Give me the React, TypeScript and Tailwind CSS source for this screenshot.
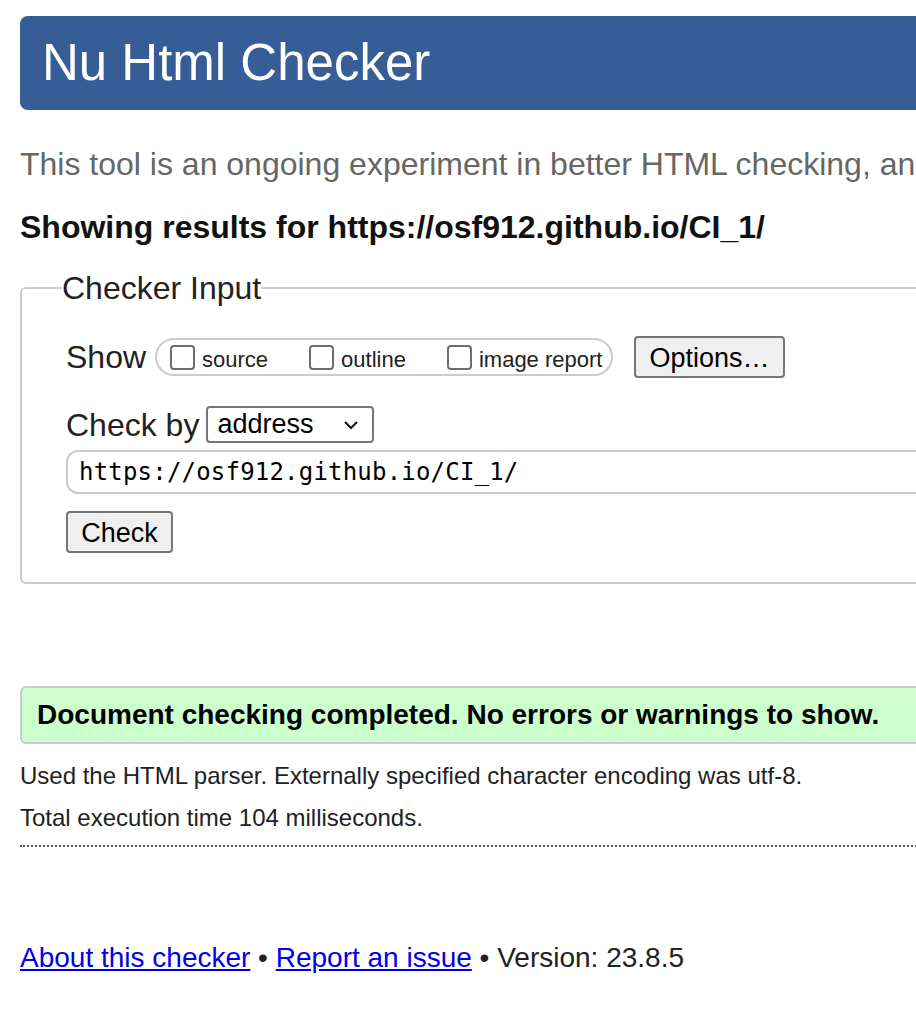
import React from 'react';

const Box: React.FC<{ label: string; className?: string }> = ({ label, className }) => (
  <label className={`flex items-center ${className ?? ''}`}>
    <span className="block w-[25px] h-[25px] rounded-[4px] border-2 border-[#6d6d6d] bg-white" />
    <span className="ml-[7px] mt-[5px] text-[22px] text-[#222]">{label}</span>
  </label>
);

export default function App() {
  return (
    <div className="w-[916px] h-[1011px] overflow-hidden bg-white font-['Liberation_Sans',Arial,sans-serif] text-[#222]">
      <div className="pl-[20px] pt-[16px] w-[1200px]">
        {/* Header */}
        <header className="h-[94px] bg-[#365d95] rounded-[8px] flex items-center pl-[22px]">
          <h1 className="text-[51px] text-white leading-none mt-[-2px]">Nu Html Checker</h1>
        </header>

        <p className="mt-[36px] text-[32px] leading-[37px] text-[#666] whitespace-nowrap">
          This tool is an ongoing experiment in better HTML checking, and its behavior remains subject to change
        </p>

        <h2 className="mt-[26px] text-[32px] leading-[36px] font-bold text-[#111] whitespace-nowrap">
          Showing results for https://osf912.github.io/CI_1/
        </h2>

        {/* Checker Input */}
        <fieldset className="mt-[27px] border-2 border-[#cccccc] rounded-[6px] px-[44px] pb-[29px] pt-0 min-w-0">
          <legend className="-ml-[4px] px-0 text-[32px] leading-[32px] text-[#222]">Checker Input</legend>

          <div className="flex items-center mt-[32px] h-[42px]">
            <span className="text-[32px] leading-none mr-[9px]">Show</span>
            <div className="flex items-center h-[38px] w-[458px] border-2 border-[#cccccc] rounded-full pl-[13px]">
              <Box label="source" />
              <Box label="outline" className="ml-[41px]" />
              <Box label="image report" className="ml-[41px]" />
            </div>
            <button className="ml-[21px] h-[42px] w-[151px] bg-[#efefef] border-2 border-[#767676] rounded-[4px] text-[27px] text-black">
              Options…
            </button>
          </div>

          <div className="flex items-center mt-[28px] h-[37px]">
            <span className="text-[32px] leading-none mr-[7px]">Check by</span>
            <div className="flex items-center justify-between h-[37px] w-[168px] border-2 border-[#767676] rounded-[4px] pl-[9px] pr-[12px]">
              <span className="text-[27px] text-black leading-none">address</span>
              <svg width="18" height="12" viewBox="0 0 18 12" fill="none" stroke="#111" strokeWidth="2">
                <path d="M3 3l6 6 6-6" />
              </svg>
            </div>
          </div>

          <div className="mt-[7px] h-[44px] border-2 border-[#cccccc] rounded-[12px] flex items-center pl-[11px]">
            <span className="font-['DejaVu_Sans_Mono',Consolas,monospace] text-[24px] text-black tracking-[0.2px]">
              https://osf912.github.io/CI_1/
            </span>
          </div>

          <button className="mt-[17px] h-[42px] w-[107px] bg-[#efefef] border-2 border-[#767676] rounded-[4px] text-[27px] text-black">
            Check
          </button>
        </fieldset>

        {/* Success message */}
        <div className="mt-[102px] h-[58px] bg-[#ccffcc] border-2 border-[#cccccc] rounded-[6px] flex items-center pl-[15px]">
          <p className="text-[28px] font-bold text-black whitespace-nowrap">Document checking completed. No errors or warnings to show.</p>
        </div>

        <p className="mt-[18px] text-[24px] leading-[28px]">Used the HTML parser. Externally specified character encoding was utf-8.</p>
        <p className="mt-[14px] text-[24px] leading-[28px]">Total execution time 104 milliseconds.</p>

        <hr className="mt-[13px] border-0 border-t-2 border-dotted border-[#555]" />

        {/* Footer */}
        <p className="mt-[95px] text-[28px] leading-[32px] whitespace-nowrap">
          <a href="#" className="text-[#0000ee] underline">About this checker</a>
          {' • '}
          <a href="#" className="text-[#0000ee] underline">Report an issue</a>
          {' • Version: 23.8.5'}
        </p>
      </div>
    </div>
  );
}
